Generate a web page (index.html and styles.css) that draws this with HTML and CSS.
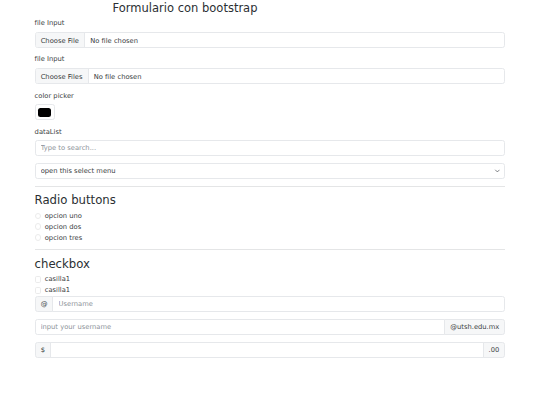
FILE: index.html
```html
<!DOCTYPE html>
<html lang="es">
<head>
<meta charset="utf-8">
<title>Formulario con bootstrap</title>
<link rel="stylesheet" href="styles.css">
</head>
<body>
<div class="container">
  <h3 class="title">Formulario con bootstrap</h3>

  <div class="field">
    <label class="form-label" for="f1">file Input</label>
    <input class="form-control" type="file" id="f1">
  </div>
  <div class="field">
    <label class="form-label" for="f2">file Input</label>
    <input class="form-control" type="file" id="f2" multiple>
  </div>
  <div class="field">
    <label class="form-label" for="c1">color picker</label>
    <input class="form-control form-control-color" type="color" id="c1" value="#000000">
  </div>
  <div class="field">
    <label class="form-label" for="d1">dataList</label>
    <input class="form-control" list="opts" id="d1" placeholder="Type to search...">
    <datalist id="opts"><option value="uno"></option></datalist>
  </div>
  <div class="select-wrap">
    <select class="form-select">
      <option>open this select menu</option>
      <option>uno</option>
    </select>
    <svg class="chevron" viewBox="0 0 16 16" aria-hidden="true"><path d="m2 5 6 6 6-6" fill="none" stroke="#343a40" stroke-width="2" stroke-linecap="round" stroke-linejoin="round"/></svg>
  </div>

  <hr class="sep">
  <h3 class="heading">Radio buttons</h3>
  <div class="form-check"><input class="form-check-input radio" type="radio" name="r" id="r1"><label for="r1">opcion uno</label></div>
  <div class="form-check"><input class="form-check-input radio" type="radio" name="r" id="r2"><label for="r2">opcion dos</label></div>
  <div class="form-check"><input class="form-check-input radio" type="radio" name="r" id="r3"><label for="r3">opcion tres</label></div>

  <hr class="sep">
  <h3 class="heading">checkbox</h3>
  <div class="form-check"><input class="form-check-input box" type="checkbox" id="k1"><label for="k1">casilla1</label></div>
  <div class="form-check"><input class="form-check-input box" type="checkbox" id="k2"><label for="k2">casilla1</label></div>

  <div class="input-group">
    <span class="addon">@</span>
    <input class="form-control" type="text" placeholder="Username">
  </div>
  <div class="input-group">
    <input class="form-control" type="text" placeholder="input your username">
    <span class="addon">@utsh.edu.mx</span>
  </div>
  <div class="input-group">
    <span class="addon">$</span>
    <input class="form-control" type="text">
    <span class="addon">.00</span>
  </div>
</div>
</body>
</html>
```

FILE: styles.css
```css
html, body {
  margin: 0;
  padding: 0;
  background: #ffffff;
}

body {
  font-family: "DejaVu Sans", sans-serif;
  font-size: 6.75px;
  line-height: 1.5;
  color: #3a3e42;
}

.container {
  width: 470.8px;
  margin: 0 auto;
}

.title,
.heading {
  font-size: 11.7px;
  font-weight: 400;
  line-height: 14.2px;
  margin: 0 0 3.375px 0;
  color: #2b2f33;
}

.title {
  margin-left: 78px;
  font-size: 11.5px;
  padding-top: 0.6px;
}

.field {
  margin-bottom: 6.75px;
}

.form-label {
  display: inline-block;
  margin-bottom: 3.375px;
}

.form-control,
.form-select {
  display: block;
  width: 100%;
  height: 16.03px;
  box-sizing: border-box;
  padding: 1.95px 5.0625px;
  font-family: inherit;
  font-size: 6.75px;
  line-height: 10.125px;
  color: #3a3e42;
  background: #ffffff;
  border: 1px solid #e6e8eb;
  border-radius: 2.53px;
  appearance: none;
  -webkit-appearance: none;
  margin: 0;
  overflow: hidden;
  outline: none;
}

.form-control::placeholder {
  color: #8d9399;
  opacity: 1;
}

.form-control::file-selector-button {
  font: inherit;
  color: #3a3e42;
  height: 16.03px;
  padding: 0 5.0625px;
  margin: -1.95px 5.0625px -1.95px -5.0625px;
  background: #f6f7f8;
  border: 0;
  border-right: 1px solid #e6e8eb;
  border-radius: 0;
}

.form-control-color {
  width: 20.25px;
  padding: 2.53px;
}

.form-control-color::-webkit-color-swatch-wrapper {
  padding: 0;
}

.form-control-color::-webkit-color-swatch {
  border: 0;
  border-radius: 2.53px;
}

.select-wrap {
  position: relative;
}

.form-select {
  padding-right: 15.19px;
}

.chevron {
  position: absolute;
  right: 5.06px;
  top: 50%;
  width: 6.75px;
  height: 5.06px;
  transform: translateY(-50%);
  pointer-events: none;
}

.sep {
  margin: 6.5px 0;
  border: 0;
  border-top: 1px solid #e4e5e6;
  height: 0;
}

.form-check {
  display: block;
  min-height: 10.125px;
  padding-left: 10.125px;
  margin-bottom: 0.84px;
}

.form-check label {
  line-height: 10.125px;
}

.form-check-input {
  float: left;
  width: 6.75px;
  height: 6.75px;
  margin: 1.69px 0 0 -10.125px;
  box-sizing: border-box;
  appearance: none;
  -webkit-appearance: none;
  background: #ffffff;
  border: 1px solid #ebebeb;
}

.radio {
  border-radius: 50%;
}

.box {
  border-radius: 1.7px;
}

.input-group {
  display: flex;
  align-items: stretch;
  width: 100%;
  height: 16.03px;
  margin-bottom: 6.75px;
}

.input-group .form-control {
  flex: 1 1 auto;
  width: 1%;
  border-radius: 0;
}

.addon {
  display: flex;
  align-items: center;
  padding: 0 5.0625px;
  white-space: nowrap;
  background: #f6f7f8;
  border: 1px solid #e6e8eb;
  box-sizing: border-box;
}

.input-group > :first-child {
  border-top-left-radius: 2.53px;
  border-bottom-left-radius: 2.53px;
}

.input-group > :last-child {
  border-top-right-radius: 2.53px;
  border-bottom-right-radius: 2.53px;
}

.input-group > :not(:first-child) {
  margin-left: -1px;
}
```
